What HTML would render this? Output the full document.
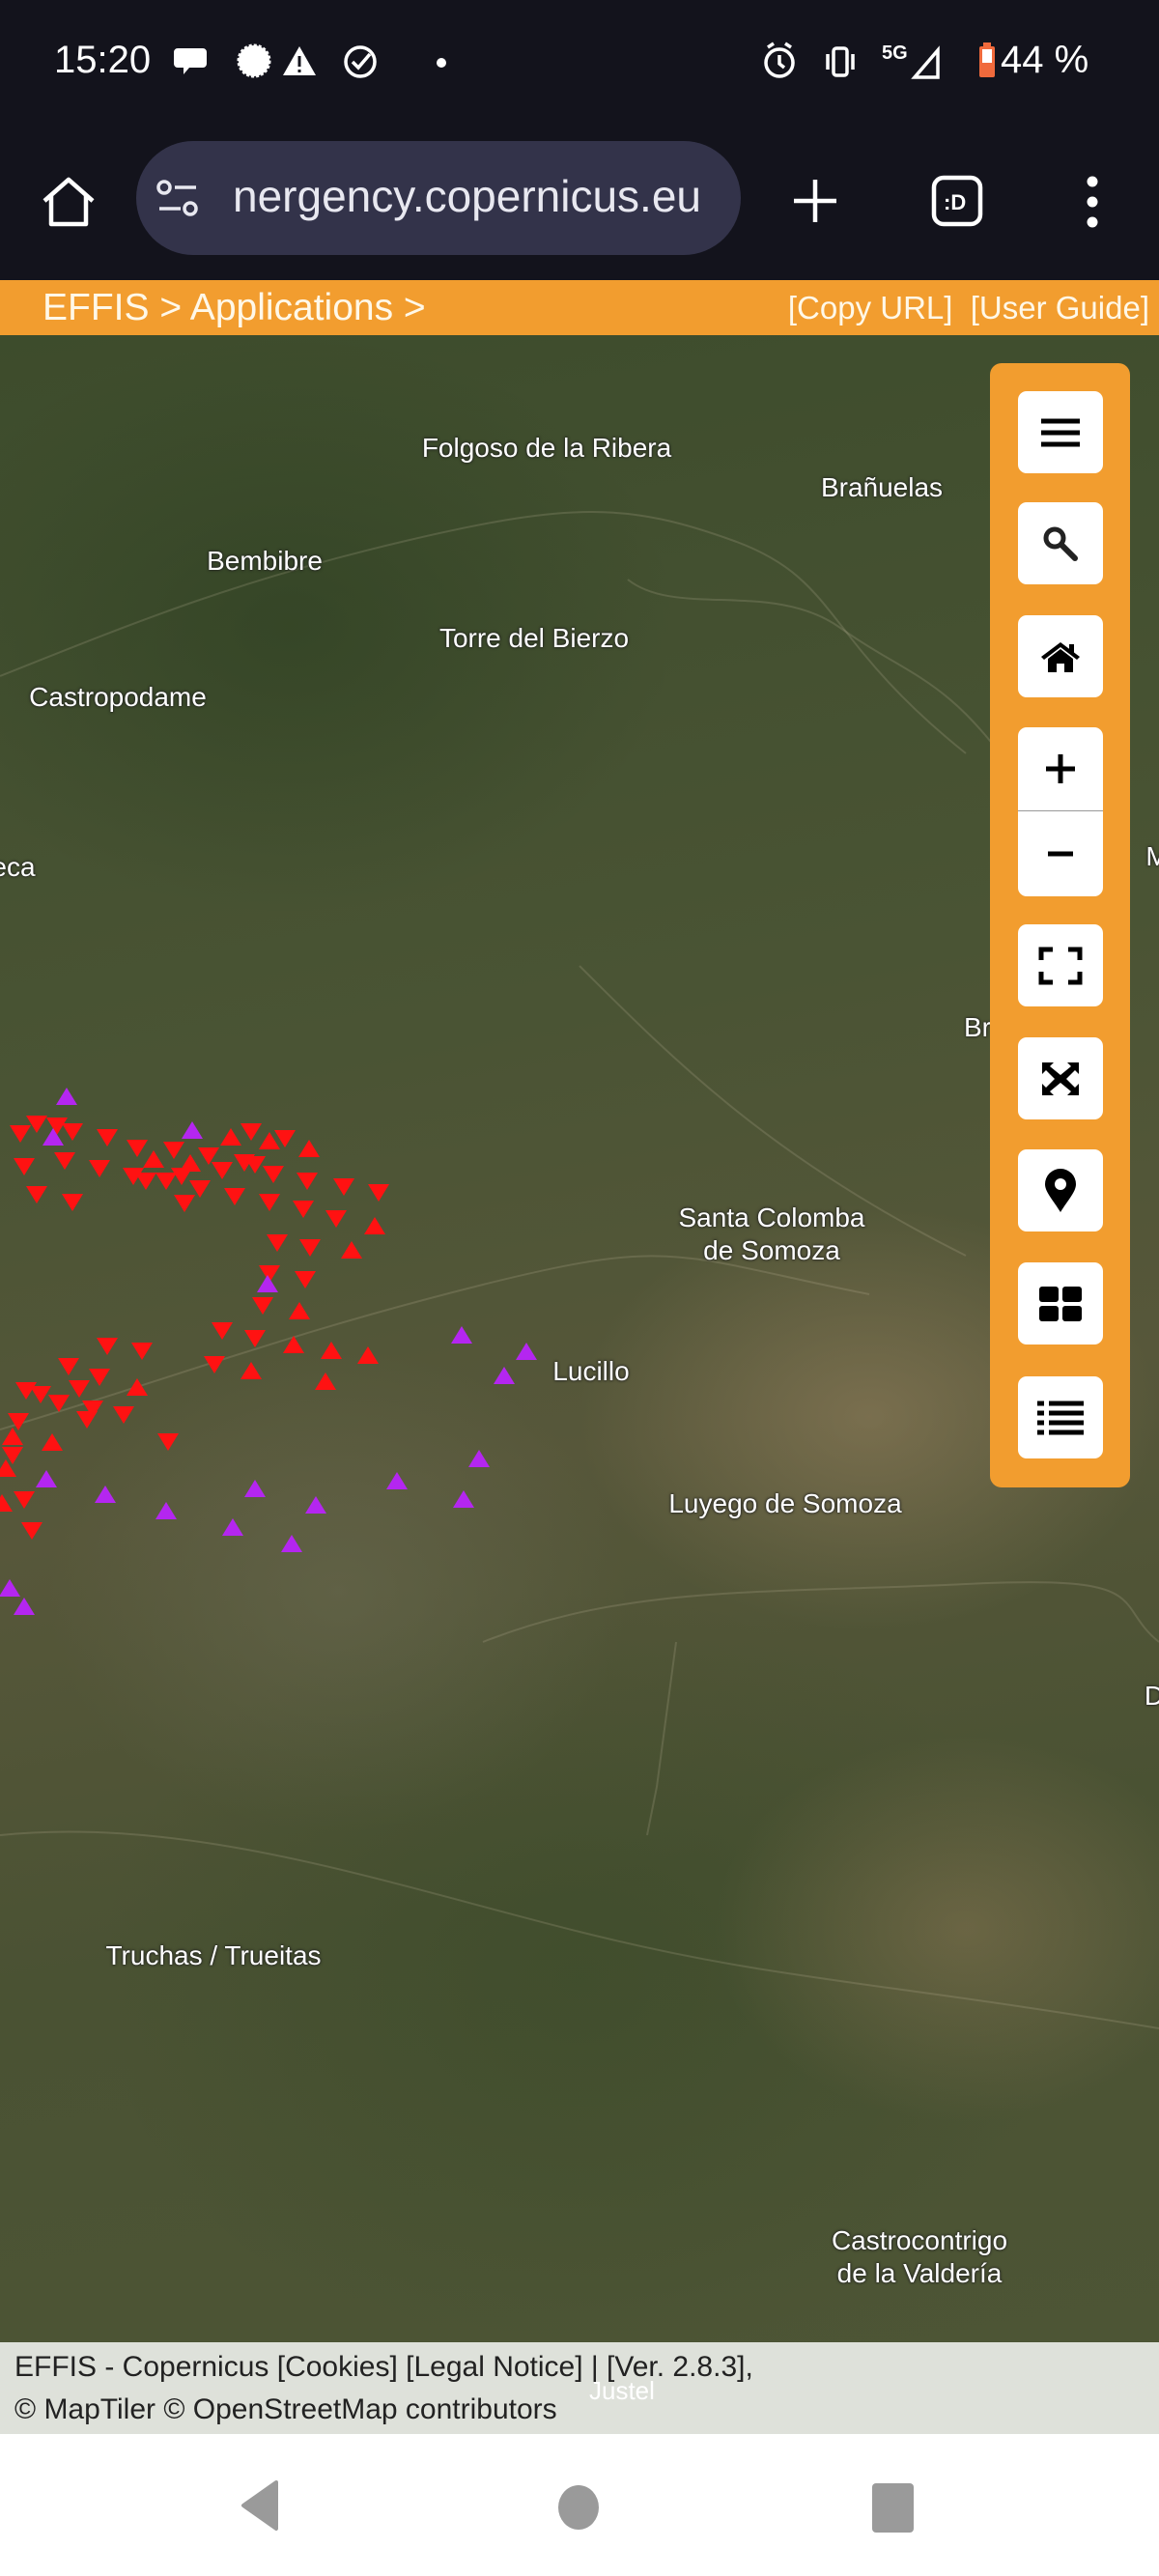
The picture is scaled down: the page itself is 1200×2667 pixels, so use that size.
<!DOCTYPE html>
<html><head><meta charset="utf-8">
<style>
*{margin:0;padding:0;box-sizing:border-box}
html,body{width:1200px;height:2667px;overflow:hidden;background:#fff;font-family:"Liberation Sans",sans-serif}
#status{position:absolute;left:0;top:0;width:1200px;height:140px;background:#13131c;color:#fff}
#browser{position:absolute;left:0;top:140px;width:1200px;height:150px;background:#13131c}
#url{position:absolute;left:141px;top:6px;width:626px;height:118px;border-radius:59px;background:#33334a;color:#e8e8f0;font-size:46px}
#orange{position:absolute;left:0;top:290px;width:1200px;height:57px;background:#f29d2f;color:#fff8e8;font-size:36px;line-height:57px}
#map{position:absolute;left:0;top:347px;width:1200px;height:2078px;overflow:hidden;
background:
radial-gradient(ellipse 300px 220px at 900px 1120px,rgba(150,130,95,.55),transparent),
radial-gradient(ellipse 260px 200px at 1000px 1650px,rgba(140,120,85,.5),transparent),
radial-gradient(ellipse 200px 150px at 1100px 2250px,rgba(170,140,100,.5),transparent),
radial-gradient(ellipse 300px 250px at 350px 1300px,rgba(110,110,85,.45),transparent),
radial-gradient(ellipse 400px 300px at 300px 300px,rgba(40,60,30,.5),transparent),
radial-gradient(ellipse 500px 400px at 600px 1700px,rgba(50,70,35,.4),transparent),
linear-gradient(170deg,#3d4c2c 0%,#4a5434 35%,#57573a 55%,#4a5233 75%,#4d5535 100%)}
.lb{position:absolute;color:#fff;font-size:28px;white-space:nowrap;text-shadow:0 0 3px #222,0 0 2px #222;transform:translate(-50%,-50%);text-align:center;line-height:34px}
#panel{position:absolute;left:1025px;top:376px;width:145px;height:1164px;background:#f29d2f;border-radius:12px}
.btn{position:absolute;left:29px;width:88px;background:#fff;border-radius:9px;display:flex;align-items:center;justify-content:center}
#attr{position:absolute;left:0;top:2425px;width:1200px;height:95px;background:rgba(215,218,210,.82);color:#222;font-size:30px;line-height:44px;padding:4px 0 0 15px}
#nav{position:absolute;left:0;top:2520px;width:1200px;height:147px;background:#fff}
</style></head><body>
<div id="status">
 <div style="position:absolute;left:56px;top:40px;font-size:40px">15:20</div>
 <svg style="position:absolute;left:180px;top:44px" width="300" height="40" viewBox="0 0 300 40">
  <path d="M4 6h26a4 4 0 0 1 4 4v12a4 4 0 0 1-4 4H16l-6 7v-7H4a4 4 0 0 1-4-4V10a4 4 0 0 1 4-4z" fill="#fff"/>
  <circle cx="83" cy="19" r="16" fill="#fff" stroke="#fff" stroke-dasharray="3 2" stroke-width="3"/>
  <path d="M130 4l17 30h-34z" fill="#fff"/><rect x="128.5" y="14" width="3" height="11" fill="#13131c"/><rect x="128.5" y="28" width="3" height="3" fill="#13131c"/>
  <circle cx="193" cy="20" r="15" fill="none" stroke="#fff" stroke-width="3.5"/><path d="M185 20l6 6 12-14" fill="none" stroke="#fff" stroke-width="3.5"/>
  <circle cx="277" cy="21" r="5" fill="#fff"/>
 </svg>
 <svg style="position:absolute;left:785px;top:40px" width="380" height="46" viewBox="0 0 380 46">
  <circle cx="22" cy="25" r="14" fill="none" stroke="#fff" stroke-width="3.5"/><path d="M22 17v9l5 4M10 9l6-4M34 9l-6-4" stroke="#fff" stroke-width="3.5" fill="none"/>
  <rect x="78" y="10" width="14" height="28" rx="3" fill="none" stroke="#fff" stroke-width="3.5"/><path d="M72 16v16M98 16v16" stroke="#fff" stroke-width="3.5"/>
  <text x="128" y="21" fill="#fff" font-size="20" font-weight="bold" font-family="Liberation Sans">5G</text>
  <path d="M186 12v28h-24z" fill="none" stroke="#fff" stroke-width="3.5"/>
  <rect x="229" y="8" width="16" height="32" rx="2" fill="#f06a3c"/><rect x="233" y="4" width="8" height="5" fill="#f06a3c"/><rect x="232" y="11" width="10" height="14" fill="#fff"/>
 </svg>
 <div style="position:absolute;left:1036px;top:40px;font-size:40px">44 %</div>
</div>
<div id="browser">
 <svg style="position:absolute;left:42px;top:40px" width="58" height="58" viewBox="0 0 58 58"><path d="M4 28L29 6l25 22M11 22v30h36V22" fill="none" stroke="#fff" stroke-width="4.5" stroke-linejoin="round"/></svg>
 <div id="url">
  <svg style="position:absolute;left:20px;top:40px" width="46" height="40" viewBox="0 0 46 40"><circle cx="9" cy="8" r="6" fill="none" stroke="#e8e8f0" stroke-width="3.5"/><path d="M20 8h22M4 30h22" stroke="#e8e8f0" stroke-width="3.5"/><circle cx="36" cy="30" r="6" fill="none" stroke="#e8e8f0" stroke-width="3.5"/></svg>
  <div style="position:absolute;left:100px;top:30px;white-space:nowrap">nergency.copernicus.eu</div>
 </div>
 <svg style="position:absolute;left:818px;top:42px" width="52" height="52" viewBox="0 0 52 52"><path d="M26 4v44M4 26h44" stroke="#fff" stroke-width="4.5"/></svg>
 <svg style="position:absolute;left:963px;top:40px" width="56" height="56" viewBox="0 0 56 56"><rect x="4" y="4" width="48" height="48" rx="10" fill="none" stroke="#fff" stroke-width="4.5"/><text x="14" y="37" fill="#fff" font-size="22" font-weight="bold" font-family="Liberation Sans">:D</text></svg>
 <svg style="position:absolute;left:1116px;top:38px" width="30" height="62" viewBox="0 0 30 62"><circle cx="15" cy="10" r="5.5" fill="#fff"/><circle cx="15" cy="31" r="5.5" fill="#fff"/><circle cx="15" cy="52" r="5.5" fill="#fff"/></svg>
</div>
<div id="orange"><span style="position:absolute;left:44px;font-size:39px">EFFIS &gt; Applications &gt;</span><span style="position:absolute;right:10px;font-size:33px">[Copy URL]&nbsp; [User Guide]</span></div>
<div id="map">
 <svg width="1200" height="2078" style="position:absolute;left:0;top:0" viewBox="0 347 1200 2078">
  <g fill="none" stroke="rgba(210,200,170,.18)" stroke-width="2">
   <path d="M0 700 C150 640 250 600 420 560 S650 520 760 560 850 660 1000 780"/>
   <path d="M650 600 C700 640 800 600 870 650 S980 700 1050 800"/>
   <path d="M0 1480 C200 1420 300 1380 500 1330 S700 1300 900 1340"/>
   <path d="M500 1700 C650 1640 800 1650 1000 1640 S1150 1660 1200 1700"/>
   <path d="M700 1700 L680 1850 L670 1900"/>
   <path d="M0 1900 C200 1880 400 1950 600 2000 S900 2050 1200 2100"/>
   <path d="M600 1000 C700 1100 800 1200 1000 1300"/>
  </g>
 </svg>
 <svg width="1200" height="2078" style="position:absolute;left:0;top:0">
  <defs>
   <path id="rd" d="M-11 -8h22l-11 18z" fill="#ff1212"/>
   <path id="ru" d="M-11 8h22l-11 -18z" fill="#ff1212"/>
   <path id="pu" d="M-11 8h22l-11 -18z" fill="#b426f0"/>
  </defs>
  <g transform="translate(0,-347)">
   <use href="#rd" x="21" y="1173"/><use href="#rd" x="38" y="1163"/><use href="#rd" x="59" y="1165"/><use href="#rd" x="75" y="1171"/><use href="#rd" x="111" y="1177"/><use href="#rd" x="142" y="1188"/><use href="#rd" x="180" y="1190"/><use href="#rd" x="25" y="1207"/><use href="#rd" x="67" y="1201"/><use href="#rd" x="103" y="1209"/><use href="#rd" x="138" y="1217"/><use href="#rd" x="151" y="1222"/><use href="#rd" x="172" y="1222"/><use href="#rd" x="188" y="1217"/><use href="#rd" x="216" y="1196"/><use href="#rd" x="230" y="1211"/><use href="#rd" x="253" y="1203"/><use href="#rd" x="264" y="1205"/><use href="#rd" x="260" y="1171"/><use href="#rd" x="295" y="1178"/><use href="#rd" x="38" y="1236"/><use href="#rd" x="75" y="1244"/><use href="#rd" x="207" y="1230"/><use href="#rd" x="191" y="1245"/><use href="#rd" x="243" y="1238"/><use href="#rd" x="279" y="1244"/><use href="#rd" x="314" y="1251"/><use href="#rd" x="283" y="1215"/><use href="#rd" x="318" y="1222"/><use href="#rd" x="356" y="1228"/><use href="#rd" x="392" y="1234"/><use href="#rd" x="348" y="1261"/><use href="#rd" x="287" y="1286"/><use href="#rd" x="321" y="1291"/><use href="#rd" x="279" y="1318"/><use href="#rd" x="316" y="1324"/><use href="#rd" x="272" y="1351"/><use href="#rd" x="230" y="1377"/><use href="#rd" x="264" y="1385"/><use href="#rd" x="222" y="1412"/><use href="#rd" x="111" y="1393"/><use href="#rd" x="147" y="1398"/><use href="#rd" x="71" y="1414"/><use href="#rd" x="103" y="1425"/><use href="#rd" x="27" y="1439"/><use href="#rd" x="42" y="1443"/><use href="#rd" x="61" y="1452"/><use href="#rd" x="82" y="1437"/><use href="#rd" x="96" y="1458"/><use href="#rd" x="90" y="1469"/><use href="#rd" x="128" y="1464"/><use href="#rd" x="19" y="1471"/><use href="#rd" x="13" y="1506"/><use href="#rd" x="174" y="1492"/><use href="#rd" x="25" y="1552"/><use href="#rd" x="33" y="1584"/>
   <use href="#ru" x="239" y="1178"/><use href="#ru" x="279" y="1182"/><use href="#ru" x="320" y="1190"/><use href="#ru" x="159" y="1201"/><use href="#ru" x="197" y="1205"/><use href="#ru" x="388" y="1270"/><use href="#ru" x="364" y="1295"/><use href="#ru" x="310" y="1358"/><use href="#ru" x="304" y="1393"/><use href="#ru" x="343" y="1399"/><use href="#ru" x="381" y="1404"/><use href="#ru" x="260" y="1420"/><use href="#ru" x="337" y="1431"/><use href="#ru" x="142" y="1437"/><use href="#ru" x="54" y="1494"/><use href="#ru" x="13" y="1488"/><use href="#ru" x="6" y="1521"/><use href="#ru" x="2" y="1557"/>
   <use href="#pu" x="69" y="1136"/><use href="#pu" x="55" y="1178"/><use href="#pu" x="199" y="1171"/><use href="#pu" x="277" y="1330"/><use href="#pu" x="478" y="1383"/><use href="#pu" x="545" y="1400"/><use href="#pu" x="522" y="1425"/><use href="#pu" x="496" y="1511"/><use href="#pu" x="411" y="1534"/><use href="#pu" x="480" y="1553"/><use href="#pu" x="48" y="1532"/><use href="#pu" x="109" y="1548"/><use href="#pu" x="172" y="1565"/><use href="#pu" x="264" y="1542"/><use href="#pu" x="327" y="1559"/><use href="#pu" x="241" y="1582"/><use href="#pu" x="302" y="1599"/><use href="#pu" x="10" y="1645"/><use href="#pu" x="25" y="1664"/>
  </g>
 </svg>
 <div class="lb" style="left:566px;top:117px">Folgoso de la Ribera</div>
 <div class="lb" style="left:913px;top:158px">Brañuelas</div>
 <div class="lb" style="left:274px;top:234px">Bembibre</div>
 <div class="lb" style="left:553px;top:314px">Torre del Bierzo</div>
 <div class="lb" style="left:122px;top:375px">Castropodame</div>
 <div class="lb" style="left:14px;top:551px">eca</div>
 <div class="lb" style="left:1198px;top:540px">M</div>
 <div class="lb" style="left:1012px;top:717px">Br</div>
 <div class="lb" style="left:799px;top:931px">Santa Colomba<br>de Somoza</div>
 <div class="lb" style="left:612px;top:1073px">Lucillo</div>
 <div class="lb" style="left:813px;top:1210px">Luyego de Somoza</div>
 <div class="lb" style="left:1195px;top:1409px">D</div>
 <div class="lb" style="left:221px;top:1678px">Truchas / Trueitas</div>
 <div class="lb" style="left:952px;top:1990px">Castrocontrigo<br>de la Valdería</div>
</div>
<div id="panel">
 <div class="btn" style="top:29px;height:85px"><svg width="40" height="32" viewBox="0 0 40 32"><path d="M0 4h40M0 16h40M0 28h40" stroke="#000" stroke-width="5"/></svg></div>
 <div class="btn" style="top:144px;height:85px"><svg width="40" height="40" viewBox="0 0 40 40"><circle cx="14" cy="14" r="9" fill="none" stroke="#222" stroke-width="5"/><path d="M21 21l14 14" stroke="#222" stroke-width="6" stroke-linecap="round"/></svg></div>
 <div class="btn" style="top:261px;height:85px"><svg width="42" height="34" viewBox="0 0 42 34"><path d="M1 17L21 2l20 15-3 3L21 7 4 20z" fill="#000"/><path d="M8 19L21 9l13 10v14H25v-9h-8v9H8z" fill="#000"/><rect x="30" y="4" width="5" height="9" fill="#000"/></svg></div>
 <div class="btn" style="top:377px;height:175px;flex-direction:column">
  <div style="height:87px;width:88px;border-bottom:1px solid #999;display:flex;align-items:center;justify-content:center"><svg width="34" height="34"><path d="M17 2v30M2 17h30" stroke="#000" stroke-width="5"/></svg></div>
  <div style="height:88px;display:flex;align-items:center;justify-content:center"><svg width="30" height="10"><path d="M2 5h26" stroke="#000" stroke-width="5"/></svg></div>
 </div>
 <div class="btn" style="top:581px;height:85px"><svg width="46" height="40" viewBox="0 0 46 40"><path d="M3 14V3h12M31 3h12v11M43 26v11H31M15 37H3V26" fill="none" stroke="#000" stroke-width="5"/></svg></div>
 <div class="btn" style="top:698px;height:85px"><svg width="42" height="38" viewBox="0 0 42 38"><path d="M2 2h12l-4 4 11 9 11-9-4-4h12v12l-4-4-9 9 9 9 4-4v12H28l4-4-11-9-11 9 4 4H2V24l4 4 9-9-9-9-4 4z" fill="#000"/></svg></div>
 <div class="btn" style="top:814px;height:85px"><svg width="36" height="46" viewBox="0 0 36 46"><path d="M18 45C10 32 2 24 2 16a16 16 0 0 1 32 0c0 8-8 16-16 29z" fill="#000"/><circle cx="18" cy="16" r="6" fill="#fff"/></svg></div>
 <div class="btn" style="top:931px;height:85px"><svg width="44" height="36" viewBox="0 0 44 36"><rect x="0" y="0" width="20" height="16" rx="3"/><rect x="24" y="0" width="20" height="16" rx="3"/><rect x="0" y="20" width="20" height="16" rx="3"/><rect x="24" y="20" width="20" height="16" rx="3"/></svg></div>
 <div class="btn" style="top:1049px;height:85px"><svg width="48" height="36" viewBox="0 0 48 36"><path d="M0 3h7M12 3h36M0 13h7M12 13h36M0 23h7M12 23h36M0 33h7M12 33h36" stroke="#000" stroke-width="5"/></svg></div>
</div>
<div id="attr">
 <div>EFFIS - Copernicus [Cookies] [Legal Notice] | [Ver. 2.8.3],</div>
 <div>© MapTiler © OpenStreetMap contributors</div>
 <div style="position:absolute;left:610px;top:28px;color:#fff;font-size:26px">Justel</div>
</div>
<div id="nav">
 <svg style="position:absolute;left:248px;top:48px" width="42" height="52" viewBox="0 0 42 52"><path d="M38 2L4 26l34 24z" fill="#9a9a9a" stroke="#9a9a9a" stroke-linejoin="round" stroke-width="4"/></svg>
 <div style="position:absolute;left:578px;top:53px;width:42px;height:46px;border-radius:50%;background:#9a9a9a"></div>
 <div style="position:absolute;left:903px;top:51px;width:43px;height:51px;border-radius:4px;background:#9a9a9a"></div>
</div>
</body></html>
